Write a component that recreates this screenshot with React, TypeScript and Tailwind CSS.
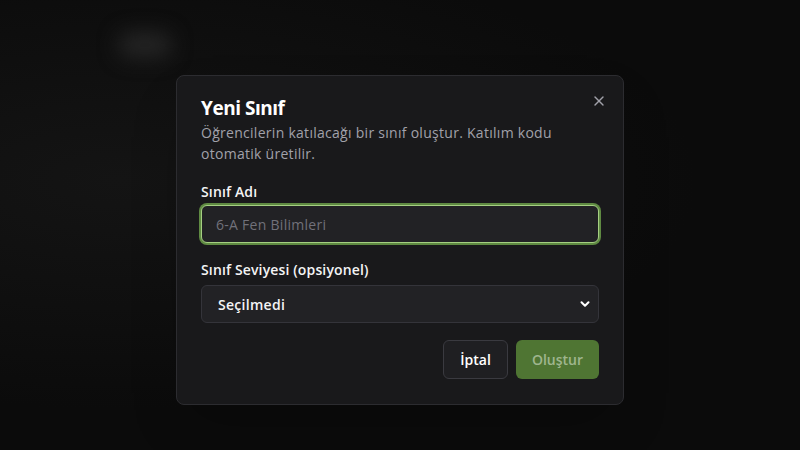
import { X, ChevronDown } from "lucide-react";

export default function App() {
  return (
    <div
      className="relative h-[450px] w-[800px] overflow-hidden bg-[#0b0b0b] text-white"
      style={{ fontFamily: "'Open Sans', 'Noto Sans', sans-serif" }}
    >
      {/* blurred page behind the overlay */}
      <div className="absolute inset-0 bg-[radial-gradient(ellipse_at_15%_40%,#141414_0%,#0b0b0b_60%)]" />
      <div className="absolute left-[118px] top-[32px] h-[26px] w-[54px] rounded-full bg-[#242424] blur-[10px]" />

      <div className="relative flex h-full justify-center pt-[75px]">
        <div className="relative h-[330px] w-[448px] rounded-lg border border-[#2c2c30] bg-[#19191b] px-6 pt-[18px] shadow-2xl">
          <button className="absolute right-4 top-[17px] text-[#a1a1aa]">
            <X className="h-4 w-4" strokeWidth={2} />
          </button>
          <h2 className="text-[19px] font-bold leading-7 tracking-tight">Yeni Sınıf</h2>
          <p className="pr-6 text-[14px] leading-[21px] tracking-[0.02em] text-[#a1a1aa]">
            Öğrencilerin katılacağı bir sınıf oluştur. Katılım kodu otomatik üretilir.
          </p>

          <label className="mt-[19px] block text-[14px] font-semibold leading-[18px] tracking-[0.01em] text-[#f4f4f5]">
            Sınıf Adı
          </label>
          <input
            className="mt-1 h-[38px] w-full rounded-md border border-[#a5cf82] bg-[#222225] px-3.5 text-[14px] tracking-[0.02em] text-white outline-none ring-2 ring-[#5f8a42] placeholder:text-[#71717a]"
            placeholder="6-A Fen Bilimleri"
          />

          <label className="mt-[18px] block text-[14px] font-semibold leading-[18px] tracking-[0.01em] text-[#f4f4f5]">
            Sınıf Seviyesi (opsiyonel)
          </label>
          <div className="mt-1.5 flex h-[38px] w-full items-center justify-between rounded-md border border-[#34343a] bg-[#222225] pl-4 pr-1.5 text-[14px] font-semibold tracking-[0.02em] text-[#f4f4f5]">
            <span>Seçilmedi</span>
            <ChevronDown className="h-3.5 w-3.5 text-white" strokeWidth={3.5} />
          </div>

          <div className="mt-[17px] flex justify-end gap-2">
            <button className="h-[39px] rounded-md border border-[#3a3a40] bg-[#1f1f22] px-4 text-[14px] font-semibold text-white">
              İptal
            </button>
            <button className="h-[39px] rounded-md bg-[#4f7533] px-4 text-[14px] font-semibold text-[#9fb58e]">
              Oluştur
            </button>
          </div>
        </div>
      </div>
    </div>
  );
}
